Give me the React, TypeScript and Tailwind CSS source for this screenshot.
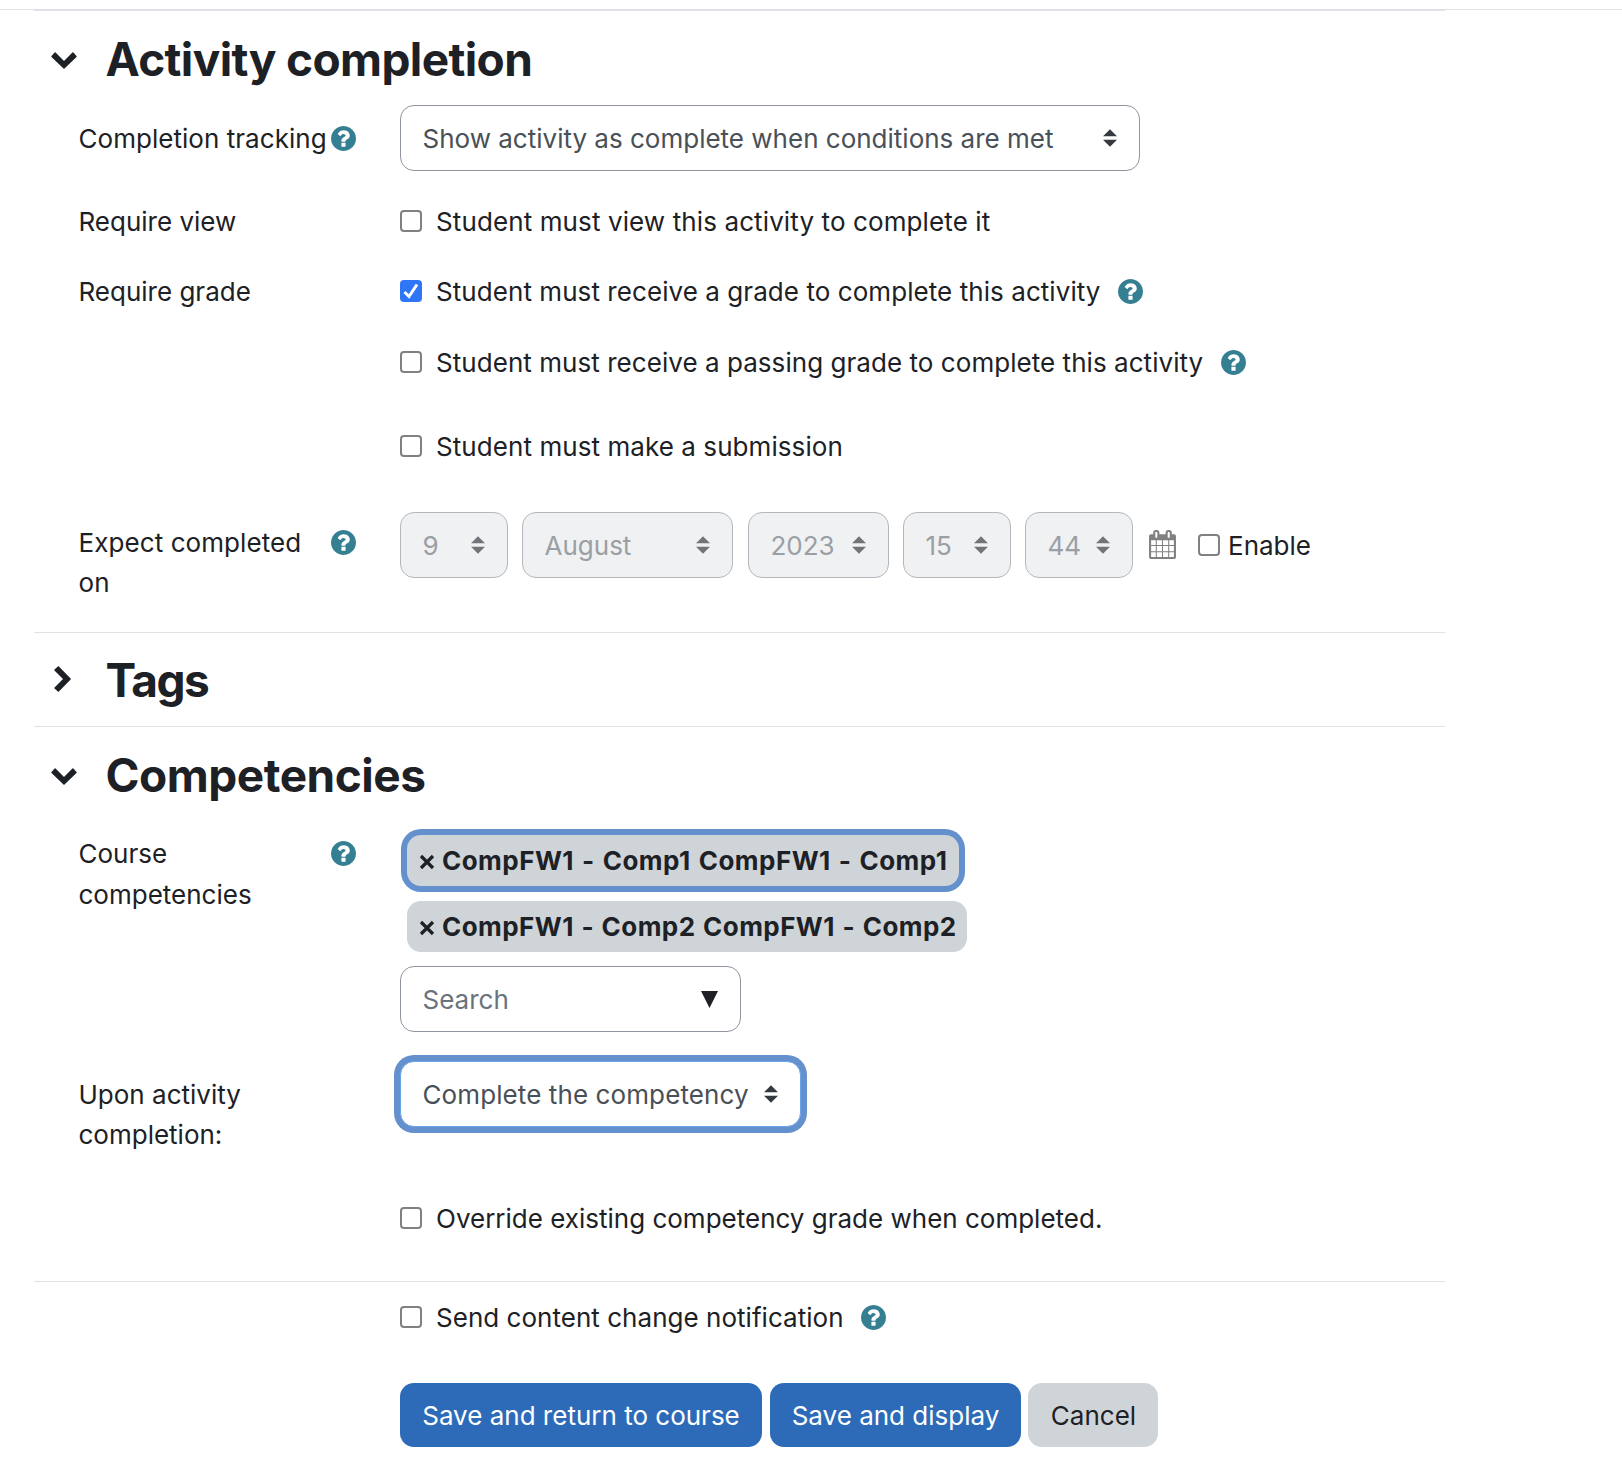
import { ReactNode, useState } from 'react';
import clsx from 'clsx';

function HelpIcon({ className }: { className?: string }) {
  return (
    <svg viewBox="128 128 1536 1536" className={clsx('h-[25px] w-[25px] shrink-0 fill-[#357f93]', className)}>
      <path d="M1024 1376v-192q0-14-9-23t-23-9h-192q-14 0-23 9t-9 23v192q0 14 9 23t23 9h192q14 0 23-9t9-23zM1280 704q0-88-55.5-163t-138.5-116-170-41q-243 0-371 213-15 24 8 42l132 100q7 6 19 6 16 0 25-12 53-68 86-92 34-24 86-24 48 0 85.5 26t37.5 59q0 38-20 61t-68 45q-63 28-115.5 86.5t-52.5 125.5v36q0 14 9 23t23 9h192q14 0 23-9t9-23q0-19 21.5-49.5t54.5-49.5q32-18 49-28.5t46-35 44.5-48 28-60.5 12.5-81zM1664 896q0 209-103 385.5t-279.5 279.5-385.5 103-385.5-103-279.5-279.5-103-385.5 103-385.5 279.5-279.5 385.5-103 385.5 103 279.5 279.5 103 385.5z" />
    </svg>
  );
}

function CalendarIcon() {
  return (
    <svg viewBox="64 0 1664 1792" className="mb-px ml-4 h-[29px] w-[27px] shrink-0 fill-[#808080]">
      <path d="M192 1664h288v-288h-288v288zm352 0h320v-288h-320v288zm-352-352h288v-320h-288v320zm352 0h320v-320h-320v320zm-352-384h288v-288h-288v288zm736 736h320v-288h-320v288zm-384-736h320v-288h-320v288zm768 736h288v-288h-288v288zm-384-352h320v-320h-320v320zm-352-864v-288q0-13-9.5-22.5t-22.5-9.5h-64q-13 0-22.5 9.5t-9.5 22.5v288q0 13 9.5 22.5t22.5 9.5h64q13 0 22.5-9.5t9.5-22.5zm736 864h288v-320h-288v320zm-384-384h320v-288h-320v288zm384 0h288v-288h-288v288zm32-480v-288q0-13-9.5-22.5t-22.5-9.5h-64q-13 0-22.5 9.5t-9.5 22.5v288q0 13 9.5 22.5t22.5 9.5h64q13 0 22.5-9.5t9.5-22.5zm384-64v1280q0 52-38 90t-90 38h-1408q-52 0-90-38t-38-90v-1280q0-52 38-90t90-38h128v-96q0-66 47-113t113-47h64q66 0 113 47t47 113v96h384v-96q0-66 47-113t113-47h64q66 0 113 47t47 113v96h128q52 0 90 38t38 90z" />
    </svg>
  );
}

function Chevron({ open, className }: { open: boolean; className?: string }) {
  return (
    <svg viewBox="0 0 26 26" className={clsx('h-[26px] w-[26px] shrink-0 fill-[#1d2125]', className)}>
      {open ? (
        <path d="M.5 8.9 3.6 5.6q.5-.5 1 0L13 13.9l8.4-8.3q.5-.5 1 0l3.1 3.3q.5.5 0 1L13.5 21.4q-.5.5-1 0L.5 9.9q-.5-.5 0-1z" />
      ) : (
        <path d="M7.9.4 4.5 3.5q-.5.5 0 1L13 13l-8.5 8.5q-.5.5 0 1l3.4 3.1q.5.5 1 0L20.6 13.5q.5-.5 0-1L8.9.4q-.5-.5-1 0z" />
      )}
    </svg>
  );
}

interface SelectBoxProps {
  value: string;
  className: string;
  textClass?: string;
  disabled?: boolean;
  focused?: boolean;
}

function SelectBox({ value, className, textClass, disabled, focused }: SelectBoxProps) {
  return (
    <div
      className={clsx(
        'flex h-[66px] shrink-0 items-center justify-between rounded-[14px] border pl-[21.5px] pr-[22px]',
        disabled ? 'border-[#b4b8bd] bg-[#f0f1f3] text-[#9a9fa4]' : 'bg-white text-[#495057]',
        !disabled && !focused && 'border-[#8f959e]',
        focused && 'border-[#6aa5ea] ring-6 ring-[#6490cd]',
        className
      )}
    >
      <span className={clsx('whitespace-nowrap pt-0.5', textClass)}>{value}</span>
      <svg
        viewBox="0 0 4 5"
        className={clsx('h-[18px] w-[14px] shrink-0', disabled ? 'fill-[#717579]' : 'fill-[#343a40]')}
      >
        <path d="M2 0L0 2h4zm0 5L0 3h4z" />
      </svg>
    </div>
  );
}

function CheckSquare({ checked, onChange }: { checked: boolean; onChange: () => void }) {
  return (
    <>
      <input type="checkbox" className="sr-only" checked={checked} onChange={onChange} />
      <span
        className={clsx(
          'flex h-[22px] w-[22px] shrink-0 items-center justify-center rounded-[4px]',
          checked ? 'bg-[#2f76f6]' : 'border-2 border-[#808080] bg-white'
        )}
      >
        {checked && (
          <svg viewBox="0 0 22 22" className="h-[22px] w-[22px] fill-none stroke-white stroke-[3]">
            <path d="M4.5 12 9 16.5 17 4.5" />
          </svg>
        )}
      </span>
    </>
  );
}

interface CheckProps {
  label: string;
  defaultChecked?: boolean;
  help?: boolean;
  textClass?: string;
}

function Check({ label, defaultChecked = false, help, textClass }: CheckProps) {
  const [checked, setChecked] = useState(defaultChecked);

  return (
    <div className="flex h-10 items-center">
      <label className="flex items-center">
        <CheckSquare checked={checked} onChange={() => setChecked(!checked)} />
        <span className={clsx('ml-3.5 whitespace-nowrap pt-0.5', textClass)}>{label}</span>
      </label>
      {help && <HelpIcon className="ml-[17.5px]" />}
    </div>
  );
}

interface RowProps {
  label?: ReactNode;
  help?: boolean;
  className?: string;
  labelClass?: string;
  children: ReactNode;
}

function Row({ label, help, className, labelClass, children }: RowProps) {
  return (
    <div className={clsx('flex items-start', className)}>
      <div className={clsx('flex w-[366px] shrink-0 pl-[44.5px]', labelClass)}>
        <div className="-mb-px mt-px w-[252px] shrink-0 whitespace-nowrap">{label}</div>
        {help && <HelpIcon className="mt-2" />}
      </div>
      <div>{children}</div>
    </div>
  );
}

interface SectionHeaderProps {
  title: string;
  open: boolean;
  textClass: string;
  iconClass?: string;
}

function SectionHeader({ title, open, textClass, iconClass }: SectionHeaderProps) {
  return (
    <div className="flex h-[93px] items-center pl-[16.5px] pt-[3px]">
      <Chevron open={open} className={iconClass} />
      <h3 className={clsx('ml-[29px] text-[46px] font-bold leading-none', textClass)}>{title}</h3>
    </div>
  );
}

interface BadgeProps {
  label: string;
  focused?: boolean;
  className: string;
}

function Badge({ label, focused, className }: BadgeProps) {
  return (
    <div
      className={clsx(
        'flex h-[51px] items-center rounded-[14px] bg-[#cfd4d8] pl-3 font-bold',
        focused && 'ring-6 ring-[#6490cd]',
        className
      )}
    >
      <svg viewBox="0 0 16 16" className="mt-0.5 h-4 w-4 shrink-0 stroke-[#1d2125] stroke-[3.2]">
        <path d="M2 2 14 14M14 2 2 14" />
      </svg>
      <span className="ml-[7px] whitespace-nowrap">{label}</span>
    </div>
  );
}

export default function App() {
  const [enabled, setEnabled] = useState(false);

  return (
    <div className="h-[1470px] w-[1622px] overflow-hidden bg-white pt-[9px] font-['Inter',sans-serif] text-[26px] leading-10 text-[#1d2125]">
      <div className="border-t border-[#dee2e6]" />
      <form className="ml-[34px] w-[1411px]">
        <section className="border-t border-[#dee2e6] pt-px">
          <SectionHeader title="Activity completion" open textClass="mb-0.5 tracking-[-0.62px]" />
          <Row label="Completion tracking" help labelClass="pt-[13px] tracking-[0.04px]">
            <SelectBox value="Show activity as complete when conditions are met" className="w-[740px]" />
          </Row>
          <Row label="Require view" className="mt-[30px]">
            <Check label="Student must view this activity to complete it" textClass="tracking-[0.11px]" />
          </Row>
          <Row label="Require grade" className="mt-[30px]">
            <Check
              label="Student must receive a grade to complete this activity"
              defaultChecked
              help
              textClass="tracking-[0.065px]"
            />
          </Row>
          <Row className="mt-[31px]">
            <Check
              label="Student must receive a passing grade to complete this activity"
              help
              textClass="tracking-[0.05px]"
            />
          </Row>
          <Row className="mt-11">
            <Check label="Student must make a submission" textClass="tracking-[0.07px]" />
          </Row>
          <Row
            label={<>Expect completed<br />on</>}
            help
            className="mt-[46px]"
            labelClass="pt-[10px] tracking-[0.08px]"
          >
            <div className="flex items-center">
              <SelectBox value="9" disabled className="w-[108px]" />
              <SelectBox value="August" disabled className="ml-3.5 w-[211px]" />
              <SelectBox value="2023" disabled className="ml-[15px] w-[141px]" />
              <SelectBox value="15" disabled className="ml-3.5 w-[108px]" />
              <SelectBox value="44" disabled className="ml-3.5 w-[108px]" />
              <CalendarIcon />
              <label className="ml-[22px] flex items-center">
                <CheckSquare checked={enabled} onChange={() => setEnabled(!enabled)} />
                <span className="ml-2 pt-0.5">Enable</span>
              </label>
            </div>
          </Row>
        </section>

        <section className="mt-[30px] border-t border-[#dee2e6]">
          <SectionHeader
            title="Tags"
            open={false}
            textClass="mb-0.5 tracking-[-1.5px]"
            iconClass="-ml-px mb-[5px] mr-px"
          />
        </section>

        <section className="border-t border-[#dee2e6]">
          <SectionHeader title="Competencies" open textClass="tracking-[-0.48px]" iconClass="mt-px" />
          <Row
            label={<>Course<br />competencies</>}
            help
            className="mt-[13px]"
            labelClass="leading-[40.5px]"
          >
            <div className="pt-0.5">
              <Badge
                label="CompFW1 - Comp1 CompFW1 - Comp1"
                focused
                className="ml-[7px] w-[552px] tracking-[0.47px] [word-spacing:1.4px]"
              />
              <Badge
                label="CompFW1 - Comp2 CompFW1 - Comp2"
                className="ml-[7px] mt-[15px] w-[560px] tracking-[0.44px] [word-spacing:1px]"
              />
              <div className="mt-3.5 flex h-[66px] w-[341px] items-center justify-between rounded-[14px] border border-[#8f959e] pl-[21.5px] pr-[22px]">
                <span className="pt-0.5 text-[#6a737b]">Search</span>
                <svg viewBox="0 0 17 17" className="h-[17px] w-[17px] fill-[#1d2125]">
                  <path d="M0 0h17L8.5 17z" />
                </svg>
              </div>
            </div>
          </Row>
          <Row label={<>Upon activity<br />completion:</>} className="mt-[29px]" labelClass="pt-[13px]">
            <SelectBox
              value="Complete the competency"
              focused
              className="w-[401px]"
              textClass="tracking-[0.1px]"
            />
          </Row>
          <Row className="mt-11">
            <Check label="Override existing competency grade when completed." />
          </Row>
        </section>

        <div className="mt-[43px] border-t border-[#dee2e6] pt-[15px]">
          <Row>
            <Check label="Send content change notification" help textClass="tracking-[0.03px]" />
            <div className="mt-[46px] flex text-white">
              <button type="button" className="h-16 w-[362px] whitespace-nowrap rounded-[14px] bg-[#2d6bb9] pt-0.5">
                Save and return to course
              </button>
              <button type="button" className="ml-2 h-16 w-[251px] whitespace-nowrap rounded-[14px] bg-[#2d6bb9] pt-0.5">
                Save and display
              </button>
              <button type="button" className="ml-[7px] h-16 w-[130px] rounded-[14px] bg-[#cfd4d8] pl-px pt-0.5 text-[#1d2125]">
                Cancel
              </button>
            </div>
          </Row>
        </div>
      </form>
    </div>
  );
}
